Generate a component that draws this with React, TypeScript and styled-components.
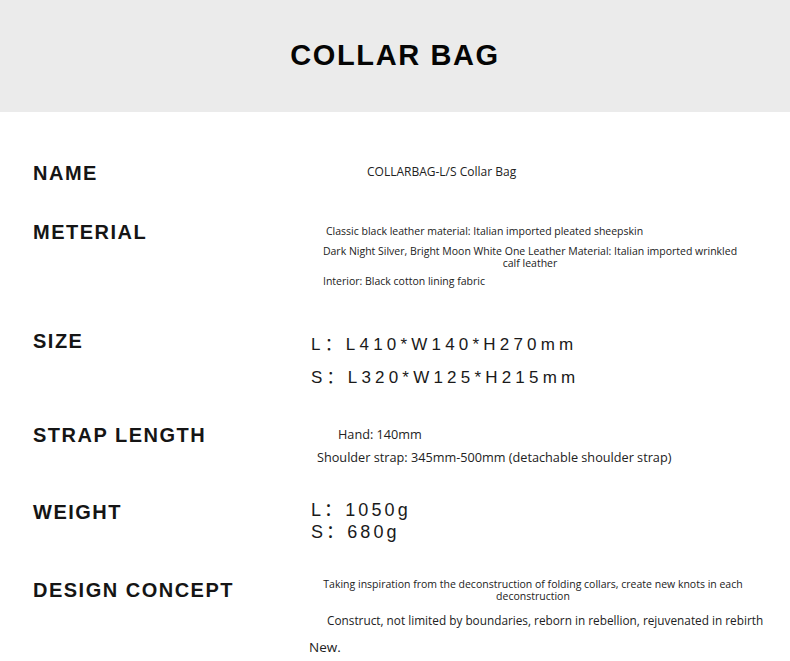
import styled, { createGlobalStyle } from "styled-components";

const GlobalStyle = createGlobalStyle`
  html, body {
    margin: 0;
    padding: 0;
    background: #ffffff;
  }
  body {
    font-family: "Liberation Sans", Arial, sans-serif;
    color: #111;
  }
`;

const Page = styled.div`
  width: 790px;
  height: 661px;
  overflow: hidden;
  background: #fff;
`;

const Header = styled.header`
  height: 112px;
  background: #ebebeb;
  display: flex;
  align-items: center;
  justify-content: center;
`;

const Title = styled.h1`
  margin: 0;
  padding-bottom: 2px;
  font-family: "Liberation Sans", Arial, sans-serif;
  font-weight: 700;
  font-size: 29px;
  letter-spacing: 1.6px;
  color: #050505;
`;

const Sheet = styled.div`
  padding-top: 49px;
`;

const Row = styled.section<{ $h: number }>`
  display: grid;
  grid-template-columns: 267px 1fr;
  padding-left: 33px;
  height: ${(p) => p.$h}px;
`;

const Label = styled.h2`
  margin: 0;
  font-family: "Liberation Sans", Arial, sans-serif;
  font-weight: 700;
  font-size: 20px;
  line-height: 24px;
  letter-spacing: 1.5px;
  color: #151515;
`;

const Value = styled.div<{ $top?: number }>`
  margin-top: ${(p) => p.$top ?? 0}px;
  display: flex;
  flex-direction: column;
  align-items: flex-start;
`;

const Note = styled.p<{ $indent?: number; $gap?: number; $size?: number; $lh?: number }>`
  margin: ${(p) => p.$gap ?? 0}px 0 0 ${(p) => p.$indent ?? 0}px;
  font-family: "Open Sans", "Noto Sans", sans-serif;
  font-size: ${(p) => p.$size ?? 10.5}px;
  line-height: ${(p) => p.$lh ?? 12}px;
  color: #222;
  white-space: nowrap;
`;

const Centered = styled(Note)<{ $width: number }>`
  width: ${(p) => p.$width}px;
  text-align: center;
`;

const Spec = styled.p<{ $lh: number; $size: number; $ls: number }>`
  margin: 0 0 0 11px;
  font-family: "Liberation Sans", "Noto Sans CJK SC", sans-serif;
  font-size: ${(p) => p.$size}px;
  line-height: ${(p) => p.$lh}px;
  letter-spacing: ${(p) => p.$ls}px;
  color: #1a1a1a;
  white-space: nowrap;
`;

export default function App() {
  return (
    <Page>
      <GlobalStyle />
      <Header>
        <Title>COLLAR BAG</Title>
      </Header>
      <Sheet>
        <Row $h={59}>
          <Label>NAME</Label>
          <Value $top={4}>
            <Note $indent={67} $size={12} $lh={14}>
              COLLARBAG-L/S Collar Bag
            </Note>
          </Value>
        </Row>

        <Row $h={109}>
          <Label>METERIAL</Label>
          <Value $top={5}>
            <Note $indent={26}>
              Classic black leather material: Italian imported pleated sheepskin
            </Note>
            <Centered $indent={0} $width={460} $gap={8}>
              Dark Night Silver, Bright Moon White One Leather Material: Italian imported wrinkled
              <br />
              calf leather
            </Centered>
            <Note $indent={23} $gap={6}>
              Interior: Black cotton lining fabric
            </Note>
          </Value>
        </Row>

        <Row $h={94}>
          <Label>SIZE</Label>
          <Value $top={-1}>
            <Spec $size={17} $lh={33} $ls={4.2}>
              L：L410*W140*H270mm
            </Spec>
            <Spec $size={17} $lh={33} $ls={4.2}>
              S：L320*W125*H215mm
            </Spec>
          </Value>
        </Row>

        <Row $h={77}>
          <Label>STRAP LENGTH</Label>
          <Value $top={4}>
            <Note $indent={38} $size={12.7} $lh={15}>
              Hand: 140mm
            </Note>
            <Note $indent={17} $size={12.7} $lh={15} $gap={8}>
              Shoulder strap: 345mm-500mm (detachable shoulder strap)
            </Note>
          </Value>
        </Row>

        <Row $h={78}>
          <Label>WEIGHT</Label>
          <Value $top={-1}>
            <Spec $size={18} $lh={22} $ls={3.1}>
              L：1050g
            </Spec>
            <Spec $size={18} $lh={22} $ls={3.1}>
              S：680g
            </Spec>
          </Value>
        </Row>

        <Row $h={90}>
          <Label>DESIGN CONCEPT</Label>
          <Value $top={0}>
            <Centered $indent={3} $width={460}>
              Taking inspiration from the deconstruction of folding collars, create new knots in each
              <br />
              deconstruction
            </Centered>
            <Note $indent={27} $size={11.8} $lh={15} $gap={11}>
              Construct, not limited by boundaries, reborn in rebellion, rejuvenated in rebirth
            </Note>
            <Note $indent={9} $size={13.5} $lh={16} $gap={11}>
              New.
            </Note>
          </Value>
        </Row>
      </Sheet>
    </Page>
  );
}
